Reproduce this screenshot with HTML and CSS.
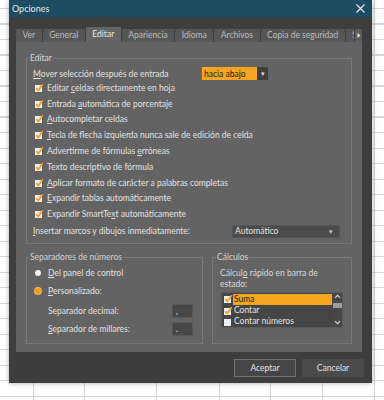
FILE: index.html
```html
<!DOCTYPE html>
<html lang="es">
<head>
    <meta charset="UTF-8">
    <meta name="viewport" content="width=device-width, initial-scale=1.0">
    <title>Opciones</title>
    <link rel="stylesheet" href="styles.css">
</head>
<body>
    <svg class="defs" width="0" height="0">
        <symbol id="tick" viewBox="0 0 10 10">
            <rect x="1" y="2" width="7" height="7" fill="#efefef"/>
            <path d="M2.3 5.2 L4.2 7.4 L8.7 1.3" stroke="#f39c1e" stroke-width="1.7" fill="none"/>
        </symbol>
        <symbol id="empty" viewBox="0 0 10 10">
            <rect x="1" y="2" width="7" height="7" fill="#efefef"/>
        </symbol>
    </svg>

    <div class="dialog">
        <div class="titlebar">
            <span class="title">Opciones</span>
            <svg class="close" width="9" height="9" viewBox="0 0 9 9">
                <path d="M0.5 0.5 L8.5 8.5 M8.5 0.5 L0.5 8.5" stroke="#e6eef2" stroke-width="1.1"/>
            </svg>
        </div>

        <div class="tabs">
            <div class="tab-list">
                <span class="tab">Ver</span>
                <span class="tab">General</span>
                <span class="tab active">Editar</span>
                <span class="tab">Apariencia</span>
                <span class="tab">Idioma</span>
                <span class="tab">Archivos</span>
                <span class="tab">Copia de seguridad</span>
                <span class="tab">Seguridad</span>
            </div>
            <span class="tab-scroll">
                <svg width="4" height="5" viewBox="0 0 4 5"><path d="M0.5 0 L3.5 2.5 L0.5 5 Z" fill="#e8e8e8"/></svg>
            </span>
        </div>

        <div class="panel">
            <fieldset class="group group-edit">
                <legend>Editar</legend>
                <div class="row row-select">
                    <span class="label-col"><u>M</u>over selección después de entrada</span>
                    <span class="select select-orange">
                        <span class="select-text">hacia abajo</span>
                        <span class="select-arrow">▾</span>
                    </span>
                </div>
                <div class="row"><svg class="box"><use href="#tick"/></svg><span>Editar <u>c</u>eldas directamente en hoja</span></div>
                <div class="row"><svg class="box"><use href="#tick"/></svg><span>Entrada <u>a</u>utomática de porcentaje</span></div>
                <div class="row"><svg class="box"><use href="#tick"/></svg><span><u>A</u>utocompletar celdas</span></div>
                <div class="row"><svg class="box"><use href="#tick"/></svg><span><u>T</u>ecla de flecha izquierda nunca sale de edición de celda</span></div>
                <div class="row"><svg class="box"><use href="#tick"/></svg><span>Advertirme de fórmulas <u>e</u>rróneas</span></div>
                <div class="row"><svg class="box"><use href="#tick"/></svg><span>Texto descriptivo de fórmula</span></div>
                <div class="row"><svg class="box"><use href="#tick"/></svg><span><u>A</u>plicar formato de carácter a palabras completas</span></div>
                <div class="row"><svg class="box"><use href="#tick"/></svg><span><u>E</u>xpandir tablas automáticamente</span></div>
                <div class="row"><svg class="box"><use href="#tick"/></svg><span>Expandir SmartTe<u>x</u>t automáticamente</span></div>
                <div class="row row-insert">
                    <span class="label-col label-wide"><u>I</u>nsertar marcos y dibujos inmediatamente:</span>
                    <span class="select select-dark">
                        <span class="select-text">Automático</span>
                        <span class="select-arrow">▾</span>
                    </span>
                </div>
            </fieldset>

            <div class="groups">
                <fieldset class="group group-numbers">
                    <legend>Separadores de números</legend>
                    <div class="opt"><span class="radio"></span><span><u>D</u>el panel de control</span></div>
                    <div class="opt"><span class="radio radio-on"></span><span><u>P</u>ersonalizado:</span></div>
                    <div class="sep-row sep-first">
                        <span class="sep-label">Separador decimal:</span>
                        <span class="field">,</span>
                    </div>
                    <div class="sep-row">
                        <span class="sep-label"><u>S</u>eparador de millares:</span>
                        <span class="field">.</span>
                    </div>
                </fieldset>

                <fieldset class="group group-calc">
                    <legend>Cálculos</legend>
                    <div class="calc-text">Cálcul<u>o</u> rápido en barra de<br>estado:</div>
                    <div class="list">
                        <div class="list-items">
                            <div class="list-item selected"><svg class="box"><use href="#tick"/></svg><span class="item-text">Suma</span></div>
                            <div class="list-item"><svg class="box"><use href="#tick"/></svg><span class="item-text">Contar</span></div>
                            <div class="list-item"><svg class="box"><use href="#empty"/></svg><span class="item-text">Contar números</span></div>
                        </div>
                        <div class="scrollbar">
                            <svg width="7" height="5" viewBox="0 0 7 5"><path d="M1 3.8 L3.5 1.3 L6 3.8" stroke="#dcdcdc" stroke-width="1.1" fill="none"/></svg>
                            <span class="thumb"></span>
                            <svg class="down" width="7" height="5" viewBox="0 0 7 5"><path d="M1 1.2 L3.5 3.7 L6 1.2" stroke="#dcdcdc" stroke-width="1.1" fill="none"/></svg>
                        </div>
                    </div>
                </fieldset>
            </div>
        </div>

        <div class="footer">
            <button class="btn btn-primary">Aceptar</button>
            <button class="btn">Cancelar</button>
        </div>
    </div>
</body>
</html>
```

FILE: styles.css
```css
* {
    box-sizing: border-box;
}
html, body {
    height: 100%;
}
body {
    margin: 0;
    font-family: Lato, "Liberation Sans", sans-serif;
    font-size: 8.5px;
    color: #e2e2e2;
    background-color: #fff;
    /* spreadsheet grid behind the dialog */
    background-image:
        linear-gradient(#d6d6d6, #d6d6d6),
        linear-gradient(#d6d6d6, #d6d6d6),
        linear-gradient(#d6d6d6, #d6d6d6),
        linear-gradient(#d6d6d6, #d6d6d6),
        linear-gradient(#d6d6d6, #d6d6d6),
        linear-gradient(#d6d6d6, #d6d6d6),
        linear-gradient(#d6d6d6, #d6d6d6),
        repeating-linear-gradient(to bottom, transparent 0 8px, #d6d6d6 8px 9px, transparent 9px 15.5px);
    background-size: 1px 100%, 1px 100%, 1px 100%, 1px 100%, 1px 100%, 1px 100%, 1px 100%, 100% 100%;
    background-position: 33px 0, 84px 0, 156px 0, 219px 0, 270px 0, 322px 0, 374px 0, 0 0;
    background-repeat: no-repeat;
}
u {
    text-decoration-thickness: 1px;
    text-underline-offset: 1px;
}
.defs {
    position: absolute;
}

.dialog {
    display: flex;
    flex-direction: column;
    width: 363px;
    height: 383px;
    margin-left: 9px;
    background: #3e3e3e;
    box-shadow: 0 0 5px rgba(0, 0, 0, 0.35);
}
.titlebar {
    display: flex;
    align-items: center;
    justify-content: space-between;
    height: 17px;
    padding: 0 7px 0 3px;
    background: #1d4c63;
}
.title {
    font-size: 9px;
    color: #e4ecef;
}

.tabs {
    display: flex;
    align-items: flex-end;
    height: 15px;
    margin: 10px 10px 0 7px;
}
.tab-list {
    display: flex;
    align-items: flex-end;
    gap: 1px;
    flex: 1;
    min-width: 0;
    height: 15px;
    overflow: hidden;
}
.tab {
    flex: none;
    height: 13px;
    line-height: 13px;
    padding: 0 6.5px;
    background: #565656;
    color: #bdbdbd;
    white-space: nowrap;
}
.tab.active {
    height: 15px;
    line-height: 14px;
    background: #646464;
    color: #e8e8e8;
}
.tab-scroll {
    display: flex;
    align-items: center;
    justify-content: center;
    flex: none;
    width: 7px;
    height: 13px;
    margin-left: 1px;
    background: #5c5c5c;
}

.panel {
    height: 310px;
    margin: 0 10px 0 7px;
    padding: 10px 10px 0;
    background: #636363;
}
.group {
    min-width: 0;
    margin: 0;
    padding: 3px 6px 4px;
    border: 1px solid #787878;
}
.group legend {
    margin-left: -4px;
    padding: 0 1px;
    line-height: 12px;
    color: #d4d4d4;
}

.row {
    display: flex;
    align-items: center;
    height: 15.8px;
    white-space: nowrap;
}
.row-select {
    height: 13px;
}
.row-insert {
    height: 16px;
    margin-top: 1px;
}
.label-col {
    flex: none;
    width: 169px;
}
.label-wide {
    width: 199px;
}
.box {
    flex: none;
    width: 10px;
    height: 10px;
    margin: 0 3px 0 1px;
}
.select {
    display: flex;
    align-items: center;
    height: 13px;
}
.select-text {
    flex: 1;
    padding-left: 2px;
}
.select-arrow {
    font-size: 7px;
}
.select-orange {
    width: 66px;
    background: #f6a521;
    color: #1b1b1b;
}
.select-orange .select-arrow {
    display: flex;
    align-items: center;
    justify-content: center;
    width: 11px;
    height: 100%;
    background: #3f3f3f;
    color: #dcdcdc;
}
.select-dark {
    width: 108px;
    background: #4a4a4a;
    border: 1px solid #565656;
    color: #e2e2e2;
}
.select-dark .select-arrow {
    width: 10px;
    color: #cfcfcf;
}

.groups {
    display: grid;
    grid-template-columns: 177px 1fr;
    gap: 9px;
    height: 93px;
    margin-top: 7px;
}
.group-numbers {
    padding: 1px 6px 4px;
}
.opt {
    display: flex;
    align-items: center;
    height: 18px;
}
.radio {
    flex: none;
    width: 6px;
    height: 6px;
    margin: 0 7px 0 2px;
    border-radius: 50%;
    background: #f4f4f4;
}
.radio-on {
    background: #f39c1e;
    box-shadow: 0 0 0 1px #e9b46a;
}
.sep-row {
    display: flex;
    align-items: center;
    height: 18px;
    padding-left: 15px;
}
.sep-first {
    margin-top: 2px;
}
.sep-label {
    width: 124px;
}
.field {
    display: flex;
    align-items: flex-end;
    width: 21px;
    height: 14px;
    padding: 0 0 1px 3px;
    background: #474747;
    border: 1px solid #585858;
    line-height: 9px;
}

.group-calc {
    padding: 5px 6px 4px 7px;
}
.calc-text {
    line-height: 10.5px;
    color: #dadada;
}
.list {
    display: flex;
    width: 122px;
    height: 36px;
    margin: 3px 0 0 1px;
    background: #454545;
    border: 1px solid #5a5a5a;
}
.list-items {
    flex: 1;
    padding-top: 0.5px;
}
.list-item {
    display: flex;
    align-items: center;
    height: 11.3px;
}
.list-item .box {
    margin: 0 0 0 1px;
}
.item-text {
    flex: 1;
    height: 100%;
    line-height: 11.3px;
    padding-left: 1px;
}
.list-item.selected .item-text {
    background: #f6a521;
    color: #1a1a1a;
}
.scrollbar {
    display: flex;
    flex-direction: column;
    align-items: center;
    width: 10px;
    padding-top: 1px;
    background: #474747;
}
.thumb {
    width: 9px;
    height: 5px;
    margin-top: 4px;
    background: #9c9c9c;
}
.scrollbar .down {
    margin-top: auto;
    margin-bottom: 2px;
}

.footer {
    display: flex;
    justify-content: flex-end;
    gap: 6px;
    padding: 7px 8px 0;
}
.btn {
    width: 62px;
    height: 18px;
    padding: 0;
    font: inherit;
    color: #e2e2e2;
    background: #4b4b4b;
    border: 1px solid #4b4b4b;
}
.btn-primary {
    background: #454545;
    border-color: #727272;
}
```
